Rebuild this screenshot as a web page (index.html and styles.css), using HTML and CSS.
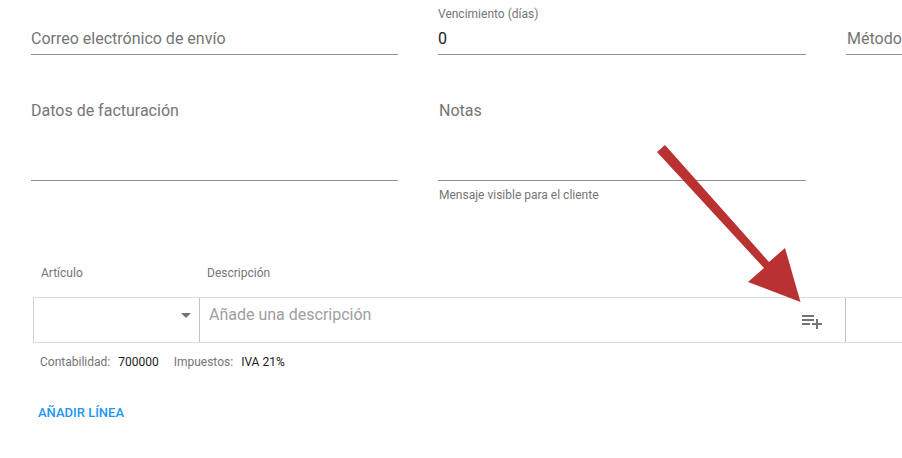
FILE: index.html
```html
<!DOCTYPE html>
<html lang="es">
<head>
<meta charset="utf-8">
<title>Factura</title>
<link rel="stylesheet" href="styles.css">
</head>
<body>
<main class="page">
  <section class="fields">
    <div class="field row-one">
      <span class="placeholder">Correo electrónico de envío</span>
    </div>
    <div class="field row-one">
      <span class="mini">Vencimiento (días)</span>
      <span class="value">0</span>
    </div>
    <div class="field row-one">
      <span class="placeholder nudge">Método</span>
    </div>
    <div class="field row-two">
      <span class="placeholder">Datos de facturación</span>
    </div>
    <div class="field row-two">
      <span class="placeholder nudge">Notas</span>
      <span class="helper">Mensaje visible para el cliente</span>
    </div>
  </section>

  <section class="lines">
    <div class="line-head">
      <span class="head-item">Artículo</span>
      <span class="head-desc">Descripción</span>
    </div>
    <div class="line-row">
      <div class="cell-item"><span class="caret"></span></div>
      <div class="cell-desc">
        <span class="desc-placeholder">Añade una descripción</span>
        <svg class="list-add" width="24" height="24" viewBox="0 0 24 24" aria-hidden="true"><path d="M2 6h12v2H2zM2 10h12v2H2zM2 14h8v2H2zM16 10h2v4h4v2h-4v4h-2v-4h-4v-2h4z"/></svg>
      </div>
      <div class="cell-rest"></div>
    </div>
    <div class="meta">
      <span class="meta-key">Contabilidad:</span><span class="meta-val">700000</span>
      <span class="meta-key second">Impuestos:</span><span class="meta-val">IVA 21%</span>
    </div>
    <a class="add-line">AÑADIR LÍNEA</a>
  </section>
</main>
<svg class="arrow" width="902" height="458" viewBox="0 0 902 458" aria-hidden="true">
  <polygon points="657,152 665,145 769,262 785,248 800.5,302 748,282 764,268"/>
</svg>
</body>
</html>
```

FILE: styles.css
```css
* { box-sizing: border-box; }
html, body { margin: 0; height: 100%; overflow: hidden; background: #fff; }
body { font-family: Roboto, "Liberation Sans", sans-serif; position: relative; }
.page { width: 902px; height: 458px; overflow: hidden; }

.fields {
  display: grid;
  grid-template-columns: 367px 368px 368px;
  column-gap: 40px;
  margin-left: 31px;
}
.field { position: relative; border-bottom: 1px solid #8f8f8f; }
.row-one { height: 55px; }
.row-two { height: 126px; }
.placeholder {
  position: absolute; left: 0; font-size: 16px; line-height: 20px; color: #757575;
}
.nudge { left: 1px; }
.row-one .placeholder { top: 29px; }
.row-two .placeholder { top: 46px; }
.mini { position: absolute; left: 0; top: 7px; font-size: 12px; line-height: 14px; color: #757575; }
.value { position: absolute; left: 0; top: 29px; font-size: 16px; line-height: 20px; color: #212121; }
.helper { position: absolute; left: 1px; top: 133px; font-size: 12px; line-height: 14px; color: #757575; white-space: nowrap; }

.lines { margin-top: 85px; }
.line-head {
  display: flex; height: 31px; font-size: 12px; line-height: 14px; color: #757575;
}
.head-item { margin-left: 41px; width: 166px; }
.line-row {
  display: flex; height: 46px; margin-left: 33px;
  border-top: 1px solid #dedede; border-bottom: 1px solid #dedede;
}
.cell-item {
  width: 167px; display: flex; align-items: center; justify-content: flex-end;
  border-left: 1px solid #d2d2d2; border-right: 1px solid #c4c4c4;
  padding: 0 8px 0 0;
}
.caret {
  width: 0; height: 0; margin-bottom: 9px;
  border-left: 5px solid transparent; border-right: 5px solid transparent; border-top: 5px solid #757575;
}
.cell-desc {
  width: 646px; position: relative; border-right: 1px solid #c4c4c4; padding: 7px 0 0 9px;
}
.desc-placeholder { font-size: 16px; line-height: 20px; color: #9e9e9e; }
.list-add { position: absolute; left: 600px; top: 11px; fill: #757575; }
.cell-rest { flex: 1; }

.meta { margin: 11px 0 0 40px; font-size: 12px; line-height: 16px; color: #757575; display: flex; }
.meta-val { color: #212121; margin-left: 8px; }
.second { margin-left: 15px; }
.add-line {
  display: block; margin: 35px 0 0 38px; font-size: 13px; line-height: 16px; font-weight: 500; color: #2196f3;
}

.arrow { position: absolute; left: 0; top: 0; pointer-events: none; fill: #b93131; }
```
